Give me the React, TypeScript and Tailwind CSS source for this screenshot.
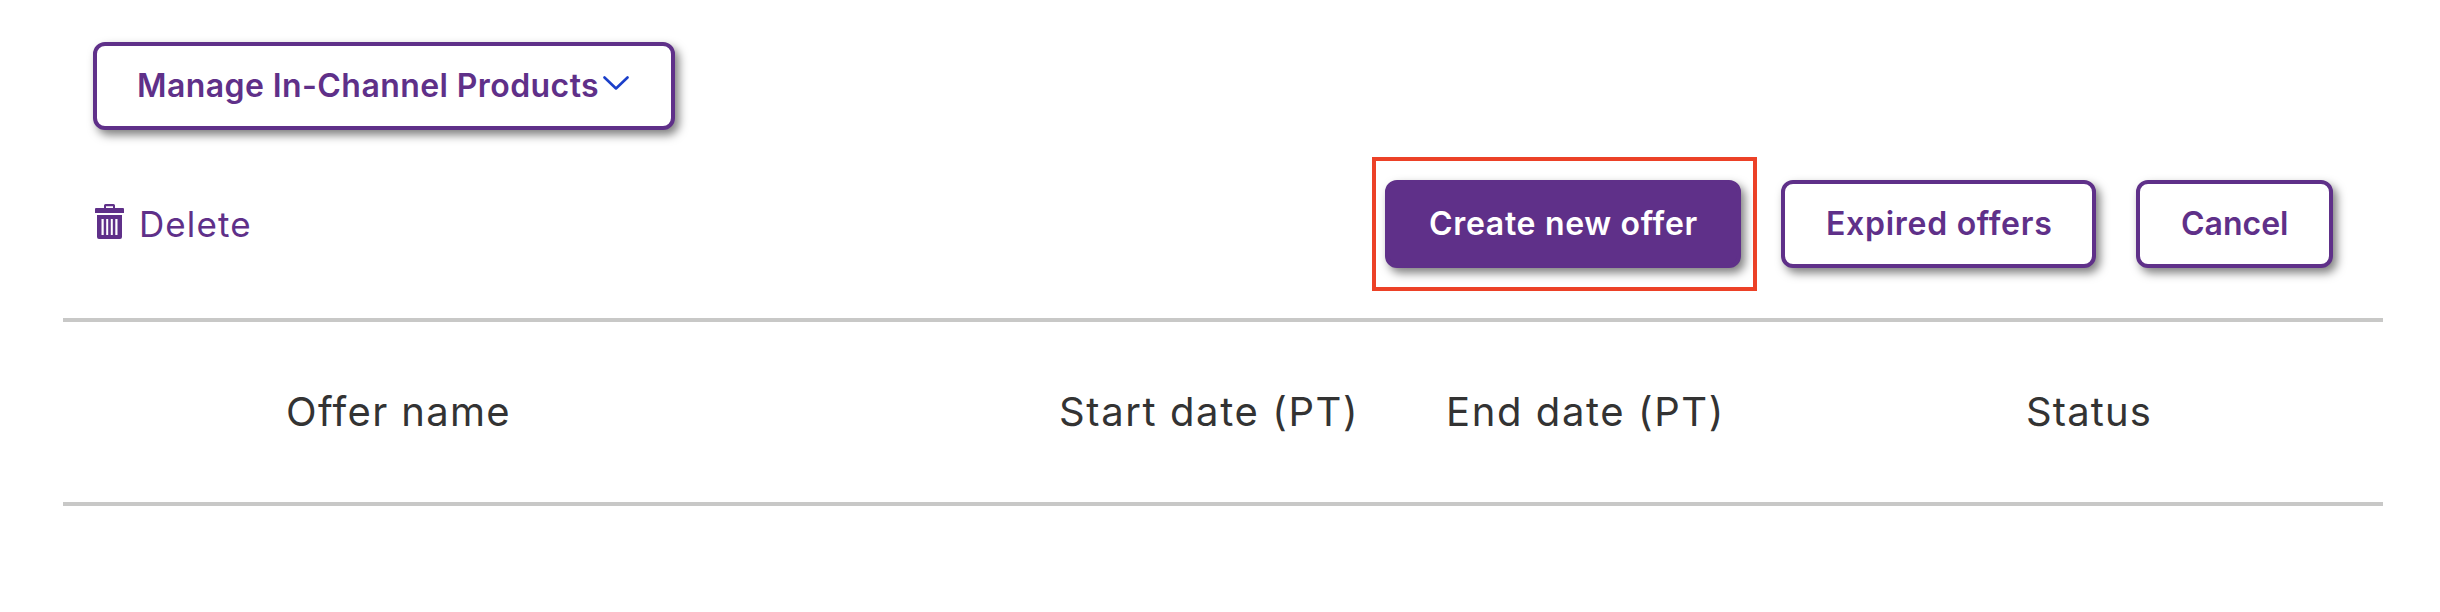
import type { ReactNode } from "react";

function Button({ className, children }: { className: string; children: ReactNode }) {
  return (
    <button
      className={
        "flex h-[88px] shrink-0 items-center whitespace-nowrap rounded-xl border-4 border-[#5f3089] pl-[41px] text-[32px] font-semibold shadow-[4px_5px_10px_0px_rgba(0,0,0,0.5)] " +
        className
      }
    >
      {children}
    </button>
  );
}

function TrashIcon() {
  return (
    <svg className="-mt-[5px] h-[35px] w-[29px] shrink-0" viewBox="0 0 29 35" fill="#5f3089">
      <path fillRule="evenodd" d="M9 4V1.500Q9 0 10.500 0H18.500Q20 0 20 1.500V4H28Q29 4 29 5V9H0V5Q0 4 1 4ZM11 2.300V4H18V2.300Z" />
      <path fillRule="evenodd" d="M2 11H27V33Q27 35 25 35H4Q2 35 2 33ZM6.500 15V31H8.700V15ZM11.200 15V31H13.200V15ZM15.800 15V31H17.800V15ZM20.300 15V31H22.500V15Z" />
    </svg>
  );
}

export default function App() {
  return (
    <main className="h-[612px] w-[2440px] overflow-hidden bg-white pt-[42px] font-['Inter',sans-serif] text-[#5f3089]">
      <div className="flex pl-[93px]">
        <Button className="w-[582px] bg-white">
          <span className="-ml-px w-[466px] text-left tracking-[0.42px]">Manage In-Channel Products</span>
          <svg className="-mt-[6px] h-[14px] w-[26px] shrink-0" viewBox="0 0 26 14" fill="none" stroke="#1b3fc9" strokeWidth="2.600" strokeLinecap="round" strokeLinejoin="round">
            <path d="M1.500 1.500L13 12.500L24.500 1.500" />
          </svg>
        </Button>
      </div>
      <div className="mt-[27px] flex h-[134px] items-center pl-[95px]">
        <div className="flex w-[1277px] items-center gap-[15px]">
          <TrashIcon />
          <span className="text-[35px] leading-10 tracking-[1.1px]">Delete</span>
        </div>
        <div className="flex h-[134px] w-[385px] items-center border-4 border-[#ec4127] pl-[9px]">
          <Button className="w-[356px] bg-[#5f3089] tracking-[0.68px] text-white">
            <span className="-ml-px">Create new offer</span>
          </Button>
        </div>
        <div className="flex gap-10 pl-6">
          <Button className="w-[315px] bg-white tracking-[0.72px]">Expired offers</Button>
          <Button className="w-[197px] bg-white">Cancel</Button>
        </div>
      </div>
      <div className="ml-[63px] mt-[27px] flex h-[188px] w-[2320px] items-center whitespace-nowrap border-y-4 border-[#c8c8c7] text-[40px] text-[#333333]">
        <div className="w-[772px] pl-[223px] tracking-[1.35px]">Offer name</div>
        <div className="w-[611px] pl-[224px] tracking-[1.6px]">Start date (PT)</div>
        <div className="w-[580px] tracking-[1.6px]">End date (PT)</div>
        <div className="tracking-[1.1px]">Status</div>
      </div>
    </main>
  );
}
